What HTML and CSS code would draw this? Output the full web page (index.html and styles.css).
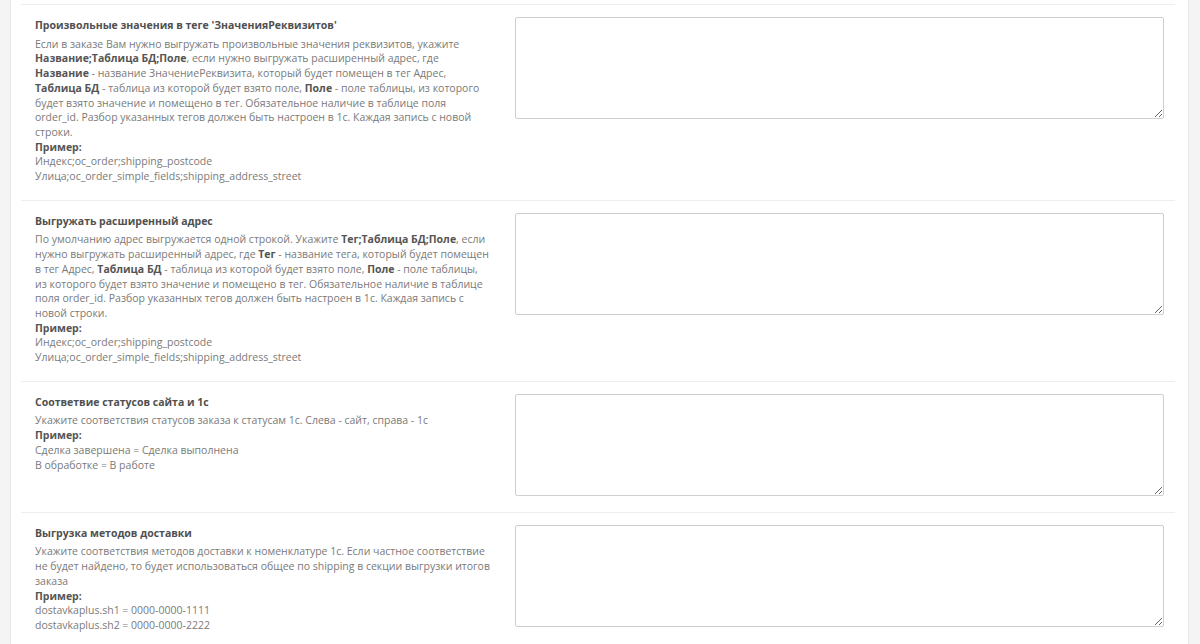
FILE: index.html
```html
<!DOCTYPE html>
<html lang="ru">
<head>
  <meta charset="UTF-8">
  <meta name="viewport" content="width=device-width, initial-scale=1.0">
  <title>Настройки выгрузки в 1С</title>
  <link rel="stylesheet" href="styles.css">
</head>
<body>
  <div class="panel">
    <div class="form-group">
      <div class="label-col">
        <div class="title">Произвольные значения в теге 'ЗначенияРеквизитов'</div>
        <div class="help">
          Если в заказе Вам нужно выгружать произвольные значения реквизитов, укажите <b>Название;Таблица БД;Поле</b>, если нужно выгружать расширенный адрес, где <b>Название</b> - название ЗначениеРеквизита, который будет помещен в тег Адрес, <b>Таблица БД</b> - таблица из которой будет взято поле, <b>Поле</b> - поле таблицы, из которого будет взято значение и помещено в тег. Обязательное наличие в таблице поля order_id. Разбор указанных тегов должен быть настроен в 1с. Каждая запись с новой строки.<br>
          <b>Пример:</b><br>
          Индекс;oc_order;shipping_postcode<br>
          Улица;oc_order_simple_fields;shipping_address_street
        </div>
      </div>
      <div class="input-col">
        <textarea class="form-control"></textarea>
      </div>
    </div>

    <div class="form-group">
      <div class="label-col">
        <div class="title">Выгружать расширенный адрес</div>
        <div class="help">
          По умолчанию адрес выгружается одной строкой. Укажите <b>Тег;Таблица БД;Поле</b>, если нужно выгружать расширенный адрес, где <b>Тег</b> - название тега, который будет помещен в тег Адрес, <b>Таблица БД</b> - таблица из которой будет взято поле, <b>Поле</b> - поле таблицы, из которого будет взято значение и помещено в тег. Обязательное наличие в таблице поля order_id. Разбор указанных тегов должен быть настроен в 1с. Каждая запись с новой строки.<br>
          <b>Пример:</b><br>
          Индекс;oc_order;shipping_postcode<br>
          Улица;oc_order_simple_fields;shipping_address_street
        </div>
      </div>
      <div class="input-col">
        <textarea class="form-control"></textarea>
      </div>
    </div>

    <div class="form-group">
      <div class="label-col">
        <div class="title">Соответвие статусов сайта и 1с</div>
        <div class="help">
          Укажите соответствия статусов заказа к статусам 1с. Слева - сайт, справа - 1с<br>
          <b>Пример:</b><br>
          Сделка завершена = Сделка выполнена<br>
          В обработке = В работе
        </div>
      </div>
      <div class="input-col">
        <textarea class="form-control"></textarea>
      </div>
    </div>

    <div class="form-group">
      <div class="label-col">
        <div class="title">Выгрузка методов доставки</div>
        <div class="help">
          Укажите соответствия методов доставки к номенклатуре 1с. Если частное соответствие не будет найдено, то будет использоваться общее по shipping в секции выгрузки итогов заказа<br>
          <b>Пример:</b><br>
          dostavkaplus.sh1 = 0000-0000-1111<br>
          dostavkaplus.sh2 = 0000-0000-2222
        </div>
      </div>
      <div class="input-col">
        <textarea class="form-control"></textarea>
      </div>
    </div>
  </div>
</body>
</html>
```

FILE: styles.css
```css
html, body {
  height: 100%;
}
body {
  margin: 0;
  background-color: #f4f4f4;
  font-family: "Open Sans", "Noto Sans", Arial, sans-serif;
  font-size: 10.5px;
  line-height: 14.7px;
  color: #7a7a7a;
  overflow: hidden;
}
.panel {
  background-color: #fff;
  margin-left: 10px;
  width: 1179px;
  min-height: 100%;
  border-left: 1px solid #e8e8e8;
  border-right: 1px solid #e8e8e8;
  box-sizing: border-box;
  padding: 4px 13px 0 10px;
}
.form-group {
  display: grid;
  grid-template-columns: 455px 1fr;
  column-gap: 25px;
  border-top: 1px solid #eeeeee;
  padding: 12px 11px 16px 14px;
}
.label-col {
  padding-top: 1px;
}
.title {
  font-weight: bold;
  color: #505050;
  margin-bottom: 4px;
}
.help b {
  color: #555;
}
.form-control {
  display: block;
  width: 100%;
  height: 102px;
  box-sizing: border-box;
  border: 1px solid #cfcfcf;
  border-radius: 2px;
  background-color: #fff;
  margin: 0;
  padding: 6px 10px;
  font-family: inherit;
  font-size: 12px;
}
```
